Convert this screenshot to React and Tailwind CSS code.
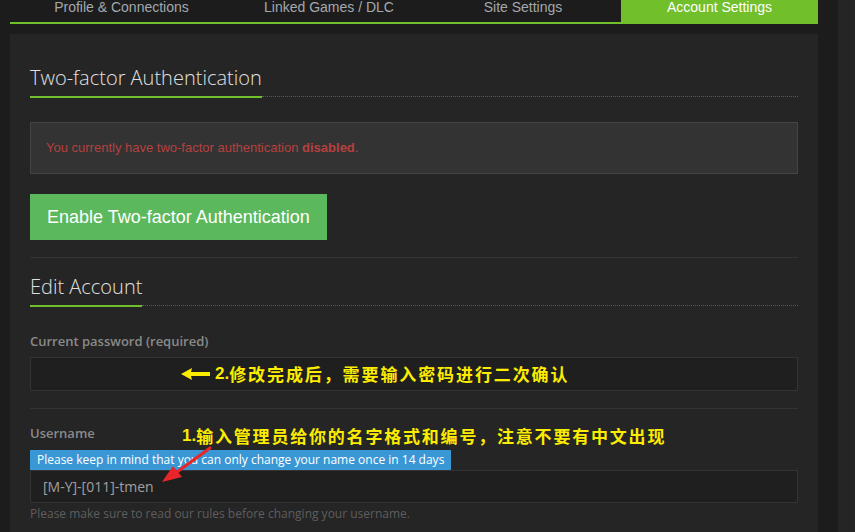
import React from "react";

const tabs = [
  { label: "Profile & Connections", width: "w-[223px]" },
  { label: "Linked Games / DLC", width: "w-[192px]" },
  { label: "Site Settings", width: "w-[196px]" },
];

const SectionTitle = ({ children }) => (
  <div className="flex items-end">
    <span className="border-b-2 border-[#72bf2c] pb-[4px] text-[20px] leading-[28px] font-light text-[#e0e0e0] font-['Open_Sans',sans-serif]">
      {children}
    </span>
    <div className="flex-1 border-b border-dotted border-[#5a5a5a] mb-[1px]" />
  </div>
);

const App = () => {
  return (
    <div className="relative w-[855px] h-[532px] overflow-hidden bg-[#1c1c1c] flex">
      <div className="w-[818px] pl-[10px] flex flex-col">
        {/* tabs */}
        <div className="flex h-[24px] font-['Liberation_Sans',Arial,sans-serif] text-[14px] leading-[14px]">
          {tabs.map((t) => (
            <div
              key={t.label}
              className={`${t.width} border-b-2 border-[#72bf2c] text-center text-[#a3a8ad]`}
            >
              {t.label}
            </div>
          ))}
          <div className="flex-1 bg-[#72bf2c] text-center text-white">Account Settings</div>
        </div>

        {/* panel */}
        <div className="mt-[10px] flex-1 bg-[#252525] px-[20px] pt-[30px]">
          <SectionTitle>Two-factor Authentication</SectionTitle>

          <div className="mt-[24px] border border-[#444] bg-[#333] px-[15px] py-[15px] text-[13px] leading-[20px] text-[#b5403e] font-['Liberation_Sans',Arial,sans-serif]">
            You currently have two-factor authentication <b>disabled</b>.
          </div>

          <button className="mt-[20px] h-[46px] bg-[#5cb85c] px-[17px] text-[18px] leading-[46px] text-white font-['Liberation_Sans',Arial,sans-serif]">
            Enable Two-factor Authentication
          </button>

          <div className="mt-[17px] border-t border-[#333]" />

          <div className="mt-[15px]">
            <SectionTitle>Edit Account</SectionTitle>
          </div>

          <div className="font-['Open_Sans',sans-serif]">
            <div className="mt-[25px] text-[13px] leading-[18px] font-semibold text-[#8a8a8a]">
              Current password (required)
            </div>
            <div className="mt-[7px] h-[34px] border border-[#333] bg-[#1f1f1f]" />

            <div className="mt-[17px] border-t border-[#333]" />

            <div className="mt-[15px] text-[13px] leading-[18px] font-semibold text-[#8a8a8a]">
              Username
            </div>
            <div className="mt-[8px] inline-block h-[20px] bg-[#3a97d6] px-[7px] text-[12px] leading-[20px] text-white">
              Please keep in mind that you can only change your name once in 14 days
            </div>
            <div className="h-[33px] border border-[#333] bg-[#1f1f1f] pl-[12px] text-[14px] leading-[31px] text-[#a0a0a0]">
              [M-Y]-[011]-tmen
            </div>
            <div className="mt-[3px] text-[12px] leading-[16px] text-[#5e5e5e]">
              Please make sure to read our rules before changing your username.
            </div>
          </div>
        </div>
      </div>
      <div className="w-[20px]" />
      <div className="flex-1 bg-[#252525]" />

      {/* annotations */}
      <div className="absolute left-[180px] top-[364px] flex items-center font-['Noto_Sans_CJK_SC',sans-serif] font-bold text-[17px] leading-[20px] text-[#fbec00]">
        <svg width="31" height="14" viewBox="0 0 31 14" className="mr-[4px]">
          <path d="M1 7 L12 1 L11 5 L30 5 L30 9 L11 9 L12 13 Z" fill="#fbec00" />
        </svg>
        <span className="font-['Liberation_Sans',Arial,sans-serif]">2.</span>
        <span className="tracking-[1.9px]">修改完成后，需要输入密码进行二次确认</span>
      </div>

      <div className="absolute left-[182px] top-[426px] flex items-center font-['Noto_Sans_CJK_SC',sans-serif] font-bold text-[17px] leading-[20px] text-[#fbec00]">
        <span className="font-['Liberation_Sans',Arial,sans-serif]">1.</span>
        <span className="tracking-[1.8px]">输入管理员给你的名字格式和编号，注意不要有中文出现</span>
      </div>

      <svg className="absolute left-[155px] top-[444px]" width="60" height="44" viewBox="0 0 60 44">
        <line x1="55" y1="4" x2="22" y2="28" stroke="#e8262a" strokeWidth="3" strokeLinecap="round" />
        <path d="M7 38 L18 22 L27 33 Z" fill="#e8262a" />
      </svg>
    </div>
  );
};

export default App;
